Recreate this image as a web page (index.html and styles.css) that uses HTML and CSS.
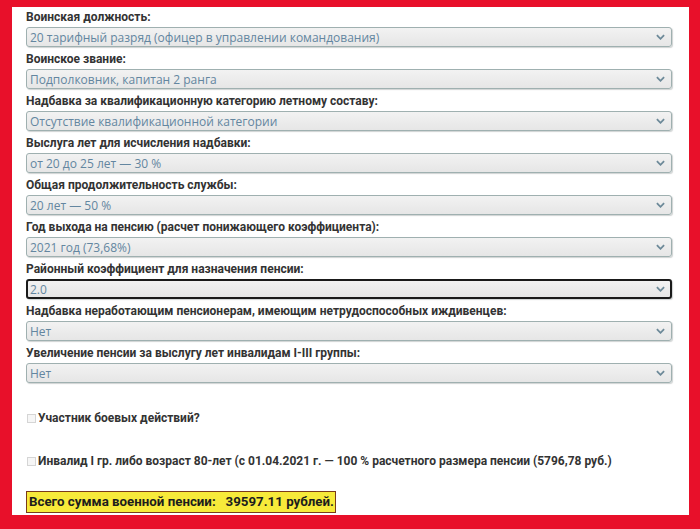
FILE: index.html
```html
<!DOCTYPE html>
<html lang="ru">
<head>
<meta charset="utf-8">
<link rel="stylesheet" href="styles.css">
</head>
<body>
<div class="panel">
  <div class="field">
    <div class="label">Воинская должность:</div>
    <div class="select"><span>20 тарифный разряд (офицер в управлении командования)</span><svg class="chev" viewBox="0 0 10 6"><path d="M1 1l4 4 4-4"/></svg></div>
  </div>
  <div class="field">
    <div class="label">Воинское звание:</div>
    <div class="select"><span>Подполковник, капитан 2 ранга</span><svg class="chev" viewBox="0 0 10 6"><path d="M1 1l4 4 4-4"/></svg></div>
  </div>
  <div class="field">
    <div class="label">Надбавка за квалификационную категорию летному составу:</div>
    <div class="select"><span>Отсутствие квалификационной категории</span><svg class="chev" viewBox="0 0 10 6"><path d="M1 1l4 4 4-4"/></svg></div>
  </div>
  <div class="field">
    <div class="label">Выслуга лет для исчисления надбавки:</div>
    <div class="select"><span>от 20 до 25 лет — 30 %</span><svg class="chev" viewBox="0 0 10 6"><path d="M1 1l4 4 4-4"/></svg></div>
  </div>
  <div class="field">
    <div class="label">Общая продолжительность службы:</div>
    <div class="select"><span>20 лет — 50 %</span><svg class="chev" viewBox="0 0 10 6"><path d="M1 1l4 4 4-4"/></svg></div>
  </div>
  <div class="field">
    <div class="label">Год выхода на пенсию (расчет понижающего коэффициента):</div>
    <div class="select"><span>2021 год (73,68%)</span><svg class="chev" viewBox="0 0 10 6"><path d="M1 1l4 4 4-4"/></svg></div>
  </div>
  <div class="field">
    <div class="label">Районный коэффициент для назначения пенсии:</div>
    <div class="select focused"><span>2.0</span><svg class="chev" viewBox="0 0 10 6"><path d="M1 1l4 4 4-4"/></svg></div>
  </div>
  <div class="field">
    <div class="label">Надбавка неработающим пенсионерам, имеющим нетрудоспособных иждивенцев:</div>
    <div class="select"><span>Нет</span><svg class="chev" viewBox="0 0 10 6"><path d="M1 1l4 4 4-4"/></svg></div>
  </div>
  <div class="field">
    <div class="label">Увеличение пенсии за выслугу лет инвалидам I-III группы:</div>
    <div class="select"><span>Нет</span><svg class="chev" viewBox="0 0 10 6"><path d="M1 1l4 4 4-4"/></svg></div>
  </div>
  <div class="check first"><span class="box"></span>Участник боевых действий?</div>
  <div class="check"><span class="box"></span>Инвалид I гр. либо возраст 80-лет (с 01.04.2021 г. — 100 % расчетного размера пенсии (5796,78 руб.)</div>
  <div class="total">Всего сумма военной пенсии: &nbsp; 39597.11 рублей.</div>
</div>
</body>
</html>
```

FILE: styles.css
```css
html, body {
  margin: 0;
  padding: 0;
}
body {
  background: #e8102a;
  width: 700px;
  height: 529px;
  overflow: hidden;
  font-family: "Open Sans", "Noto Sans", sans-serif;
}
.panel {
  margin: 7px 11px 0 12px;
  width: 677px;
  height: 508px;
  box-sizing: border-box;
  background: #fff;
  padding: 0 17px 0 14px;
  display: flex;
  flex-direction: column;
}
.field {
  margin-bottom: 2px;
}
.label {
  height: 20px;
  line-height: 20px;
  font-family: Roboto, "Open Sans", sans-serif;
  font-size: 12px;
  font-weight: 700;
  color: #333;
  white-space: nowrap;
}
.select {
  height: 20px;
  box-sizing: border-box;
  border: 1px solid #9fb0b0;
  border-radius: 3px;
  background: linear-gradient(#f2f2f2, #e6e6e6);
  box-shadow: 1px 1px 1px rgba(120, 130, 130, 0.35);
  display: flex;
  align-items: center;
  justify-content: space-between;
  padding: 0 6px 0 3px;
  font-size: 12px;
  color: #6386a0;
}
.select.focused {
  border: 2px solid #1a1a1a;
  padding-left: 2px;
  padding-right: 5px;
}
.chev {
  width: 9px;
  height: 6px;
  fill: none;
  stroke: #6d8a99;
  stroke-width: 2;
}
.check {
  display: flex;
  align-items: center;
  height: 18px;
  font-family: Roboto, "Open Sans", sans-serif;
  font-size: 12px;
  font-weight: 700;
  color: #333;
  margin-top: 25px;
}
.check.first {
  margin-top: 24px;
}
.box {
  width: 7px;
  height: 7px;
  border: 1px solid #d5d5d5;
  background: #f6f6f6;
  margin: 0 2px 0 1px;
}
.total {
  align-self: flex-start;
  margin-top: 21px;
  height: 22px;
  box-sizing: border-box;
  border: 1px solid #7a3b1a;
  background: #f7ea3a;
  padding: 0 1px 0 2px;
  line-height: 20px;
  font-family: Roboto, "Open Sans", sans-serif;
  font-size: 13.3px;
  font-weight: 700;
  color: #1d1d1d;
  white-space: nowrap;
}
```
